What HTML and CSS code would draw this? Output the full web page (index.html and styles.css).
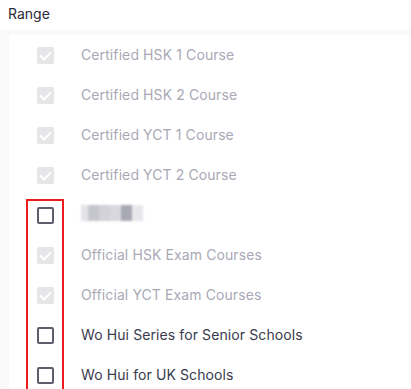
FILE: index.html
```html
<!DOCTYPE html>
<html lang="en">
<head>
  <meta charset="UTF-8">
  <meta name="viewport" content="width=device-width, initial-scale=1.0">
  <title>Range</title>
  <link rel="stylesheet" href="styles.css">
</head>
<body>

  <!-- Range field -->
  <section class="field">
    <div class="field-label">Range</div>

    <div class="range-box">
      <ul class="range-list">
        <li class="option is-disabled">
          <span class="check is-checked"></span>
          <span class="option-text">Certified HSK 1 Course</span>
        </li>
        <li class="option is-disabled">
          <span class="check is-checked"></span>
          <span class="option-text">Certified HSK 2 Course</span>
        </li>
        <li class="option is-disabled">
          <span class="check is-checked"></span>
          <span class="option-text">Certified YCT 1 Course</span>
        </li>
        <li class="option is-disabled">
          <span class="check is-checked"></span>
          <span class="option-text">Certified YCT 2 Course</span>
        </li>
        <li class="option">
          <span class="check"></span>
          <!-- name hidden in the screenshot -->
          <span class="blurred">
            <i class="px1"></i><i class="px2"></i><i class="px3"></i><i class="px4"></i><i class="px5"></i><i class="px6"></i>
          </span>
        </li>
        <li class="option is-disabled">
          <span class="check is-checked"></span>
          <span class="option-text">Official HSK Exam Courses</span>
        </li>
        <li class="option is-disabled">
          <span class="check is-checked"></span>
          <span class="option-text">Official YCT Exam Courses</span>
        </li>
        <li class="option">
          <span class="check"></span>
          <span class="option-text">Wo Hui Series for Senior Schools</span>
        </li>
        <li class="option">
          <span class="check"></span>
          <span class="option-text">Wo Hui for UK Schools</span>
        </li>
      </ul>
    </div>

    <!-- annotation -->
    <div class="highlight"></div>
  </section>

</body>
</html>
```

FILE: styles.css
```css
body {
  margin: 0;
  padding: 0;
  background-color: #fff;
  font-family: Inter, "Noto Sans", sans-serif;
  font-size: 14px;
  overflow: hidden;
}

.field {
  position: relative;
}

.field-label {
  color: #2b2b38;
  line-height: 20px;
  padding: 4px 8px 6px;
}

.range-box {
  background-color: #f9f9fa;
  padding: 5px 0 0 9px;
}

.range-list {
  list-style: none;
  margin: 0;
  padding: 0;
  background-color: #fff;
}

.option {
  display: flex;
  align-items: center;
  height: 40px;
  padding-left: 28px;
}

.check {
  box-sizing: border-box;
  flex: none;
  width: 17px;
  height: 17px;
  border: 2px solid #5d5d6c;
  border-radius: 2px;
  margin-right: 27px;
  position: relative;
}

.check.is-checked {
  border: none;
  background-color: #e6e6e9;
}

.check.is-checked::after {
  content: "";
  position: absolute;
  left: 5px;
  top: 2px;
  width: 5px;
  height: 9px;
  border: solid #fff;
  border-width: 0 2px 2px 0;
  transform: rotate(45deg);
}

.option-text {
  color: #383a4e;
  line-height: 20px;
  letter-spacing: 0.1px;
}

.is-disabled .option-text {
  color: #a9a9b5;
}

.blurred {
  display: flex;
  height: 16px;
  filter: blur(1px);
  margin-top: -4px;
}

.blurred i {
  display: block;
  width: 11px;
  height: 100%;
}

.blurred .px1 { background-color: #e4e4e8; width: 7px; }
.blurred .px2 { background-color: #c6c6cd; }
.blurred .px3 { background-color: #d2d2d8; }
.blurred .px4 { background-color: #d8d8de; }
.blurred .px5 { background-color: #a9a9b6; }
.blurred .px6 { background-color: #e8e8ec; }

.highlight {
  position: absolute;
  left: 26px;
  top: 199px;
  width: 34px;
  height: 188px;
  border: 2px solid #ee1c1c;
}
```
